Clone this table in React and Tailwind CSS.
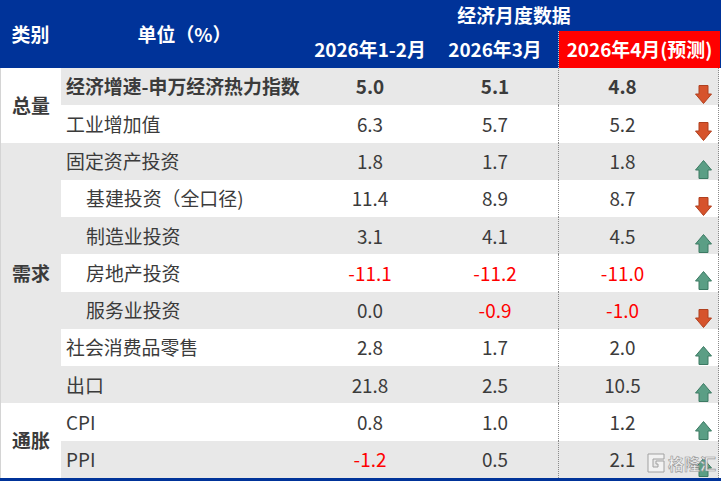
import React from "react";

const groups = [
  {
    name: "总量",
    bg: "bg-white",
    rows: [
      { label: "经济增速-申万经济热力指数", v: ["5.0", "5.1", "4.8"], dir: "down", bold: true },
      { label: "工业增加值", v: ["6.3", "5.7", "5.2"], dir: "down" },
    ],
  },
  {
    name: "需求",
    bg: "bg-[#e8e8e8]",
    rows: [
      { label: "固定资产投资", v: ["1.8", "1.7", "1.8"], dir: "up" },
      { label: "基建投资（全口径)", v: ["11.4", "8.9", "8.7"], dir: "down", indent: true },
      { label: "制造业投资", v: ["3.1", "4.1", "4.5"], dir: "up", indent: true },
      { label: "房地产投资", v: ["-11.1", "-11.2", "-11.0"], dir: "up", indent: true },
      { label: "服务业投资", v: ["0.0", "-0.9", "-1.0"], dir: "down", indent: true },
      { label: "社会消费品零售", v: ["2.8", "1.7", "2.0"], dir: "up" },
      { label: "出口", v: ["21.8", "2.5", "10.5"], dir: "up" },
    ],
  },
  {
    name: "通胀",
    bg: "bg-white",
    rows: [
      { label: "CPI", v: ["0.8", "1.0", "1.2"], dir: "up" },
      { label: "PPI", v: ["-1.2", "0.5", "2.1"], dir: "up" },
    ],
  },
];

function Arrow({ dir }) {
  if (dir === "down") {
    return (
      <svg width="17" height="19" viewBox="0 0 17 19">
        <polygon
          points="4,0.5 13,0.5 13,9 16.5,9 8.5,18.5 0.5,9 4,9"
          fill="#d6532c"
          stroke="#b0401f"
          strokeWidth="1"
        />
      </svg>
    );
  }
  return (
    <svg width="17" height="19" viewBox="0 0 17 19">
      <polygon
        points="8.5,0.5 16.5,10 13,10 13,18.5 4,18.5 4,10 0.5,10"
        fill="#5b9e85"
        stroke="#3c7a63"
        strokeWidth="1"
      />
    </svg>
  );
}

function Num({ value }) {
  const neg = value.startsWith("-");
  return <span className={neg ? "text-[#ff0000]" : ""}>{value}</span>;
}

export default function App() {
  let idx = 0;
  return (
    <div
      className="relative w-[721px] h-[482px] bg-white text-[18.9px] text-[#3b3b3b] overflow-hidden"
      style={{ fontFamily: '"Noto Sans CJK SC", "Noto Sans", sans-serif' }}
    >
      {/* header */}
      <div className="flex h-[68px] bg-[#003399] text-white font-bold">
        <div className="w-[61px] flex items-center justify-center">类别</div>
        <div className="w-[247px] flex items-center justify-center">单位（%）</div>
        <div className="w-[412px] flex flex-col">
          <div className="h-[31px] flex items-center justify-center">经济月度数据</div>
          <div className="flex h-[37px]">
            <div className="w-[124px] flex items-center justify-center">2026年1-2月</div>
            <div className="w-[127px] flex items-center justify-center border-r border-dotted border-[#c8c8c8]">
              2026年3月
            </div>
            <div className="w-[161px] flex items-center justify-center bg-[#ff0000]">
              2026年4月(预测)
            </div>
          </div>
        </div>
      </div>

      {/* body */}
      <div className="flex flex-col">
        {groups.map((g) => (
          <div key={g.name} className="flex">
            <div
              className={`w-[61px] border-l border-[#d4d4d4] flex items-center justify-center font-bold ${g.bg}`}
            >
              {g.name}
            </div>
            <div className="flex flex-col">
              {g.rows.map((r) => {
                const stripe = idx++ % 2 === 0 ? "bg-[#e8e8e8]" : "bg-white";
                return (
                  <div key={r.label} className={`flex h-[37.27px] ${stripe} ${r.bold ? "font-bold" : ""}`}>
                    <div
                      className={`w-[247px] flex items-center whitespace-nowrap ${
                        r.indent ? "pl-[25px]" : "pl-[5px]"
                      }`}
                    >
                      {r.label}
                    </div>
                    <div className="w-[124px] flex items-center justify-center">
                      <Num value={r.v[0]} />
                    </div>
                    <div className="w-[127px] flex items-center justify-center border-r border-dotted border-[#8a8a8a]">
                      <Num value={r.v[1]} />
                    </div>
                    <div className="w-[127px] flex items-center justify-center">
                      <Num value={r.v[2]} />
                    </div>
                    <div className="w-[33px] flex items-center justify-center pt-[16px] pl-[3px] border-r border-dotted border-[#8a8a8a]">
                      <Arrow dir={r.dir} />
                    </div>
                  </div>
                );
              })}
            </div>
          </div>
        ))}
      </div>
      <div className="h-[3px] bg-[#003399]" />

      {/* watermark */}
      <div className="absolute left-[646px] top-[452px] flex items-center gap-[2px] opacity-90">
        <svg width="20" height="22" viewBox="0 0 20 22">
          <path
            d="M2 2 H18 V7 H7 V15 H12 V12 H10 V9 H18 V20 H2 Z"
            fill="#f4f4f4"
            stroke="#9a9a9a"
            strokeWidth="1"
          />
        </svg>
        <span
          className="text-[16px] font-bold text-[#f2f2f2] leading-none"
          style={{ WebkitTextStroke: "0.6px #8f8f8f" }}
        >
          格隆汇
        </span>
      </div>
    </div>
  );
}
